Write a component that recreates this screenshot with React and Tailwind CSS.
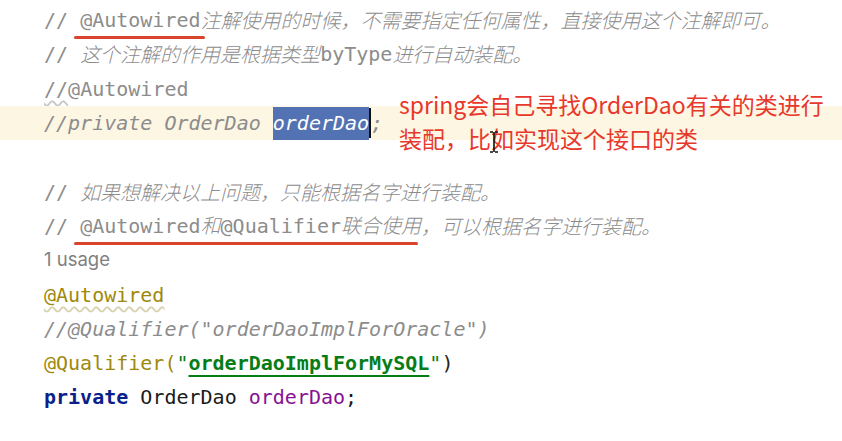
import React from 'react';

const mono = "font-['DejaVu_Sans_Mono','Noto_Sans_CJK_SC',monospace]";
const cjk = "italic font-['Noto_Sans_CJK_SC',sans-serif] font-light";

function Line({ children, className = '' }) {
  return (
    <div className={`h-[34.3px] pl-[44px] flex items-center whitespace-pre text-[20px] leading-none ${className}`}>
      {children}
    </div>
  );
}

function Marked({ children, extra = 'w-[calc(100%+10px)]' }) {
  return (
    <span className="relative">
      {children}
      <span className={`absolute left-[-6px] bottom-[-9px] h-[3px] rounded-full bg-[#d9452c] ${extra}`} />
    </span>
  );
}

export default function App() {
  return (
    <div className={`relative w-[842px] h-[441px] bg-white overflow-hidden ${mono}`}>
      <div className="pt-[3px] flex flex-col">
        <Line className="text-[#8c8c8c]">
          <span>// </span>
          <Marked>@Autowired</Marked>
          <span className={cjk}>注解使用的时候，不需要指定任何属性，直接使用这个注解即可。</span>
        </Line>
        <Line className="text-[#8c8c8c]">
          <span>// </span>
          <span className={cjk}>这个注解的作用是根据类型</span>
          <span>byType</span>
          <span className={cjk}>进行自动装配。</span>
        </Line>
        <Line className="text-[#8c8c8c]">
          <span className="underline decoration-wavy decoration-[#c8c8c8] underline-offset-4">//</span>
          <span>@Autowired</span>
        </Line>
        <Line className="text-[#8c8c8c] italic bg-[#fcf6e3]">
          <span>//private OrderDao </span>
          <span className="bg-[#5272b4] text-white h-[33px] flex items-center">orderDao</span>
          <span className="w-[2px] h-[30px] bg-[#111]" />
          <span>;</span>
        </Line>
        <Line />
        <Line className="text-[#8c8c8c]">
          <span>// </span>
          <span className={cjk}>如果想解决以上问题，只能根据名字进行装配。</span>
        </Line>
        <Line className="text-[#8c8c8c]">
          <span>// </span>
          <Marked extra="w-[344px]">
            <span>@Autowired</span>
            <span className={cjk}>和</span>
            <span>@Qualifier</span>
            <span className={cjk}>联合使用</span>
          </Marked>
          <span className={cjk}>，可以根据名字进行装配。</span>
        </Line>
        <div className="h-[34.3px] pl-[44px] flex items-center text-[18.5px] text-[#7f7f7f] font-['Inter',sans-serif]">
          1 usage
        </div>
        <Line className="text-[#9e880d]">
          <span className="underline decoration-wavy decoration-[#d8d2b0] underline-offset-4">@Autowired</span>
        </Line>
        <Line className="text-[#8c8c8c] italic">
          <span>//@Qualifier("orderDaoImplForOracle")</span>
        </Line>
        <Line>
          <span className="text-[#9e880d]">@Qualifier(</span>
          <span className="text-[#067d17]">"</span>
          <span className="text-[#067d17] font-bold underline underline-offset-[5px] decoration-[1.5px]">orderDaoImplForMySQL</span>
          <span className="text-[#067d17]">"</span>
          <span className="text-[#222]">)</span>
        </Line>
        <Line>
          <span className="text-[#0b1f8c] font-bold">private</span>
          <span className="text-[#1a1a1a]"> OrderDao </span>
          <span className="text-[#871094]">orderDao</span>
          <span className="text-[#1a1a1a]">;</span>
        </Line>
      </div>

      <div className="absolute left-[399px] top-[87px] flex flex-col text-[23px] leading-[34px] text-[#e8382b] font-['Noto_Sans_CJK_SC',sans-serif] whitespace-nowrap">
        <span>spring会自己寻找OrderDao有关的类进行</span>
        <span>装配，比如实现这个接口的类</span>
      </div>

      <svg className="absolute left-[489px] top-[131px]" width="10" height="22" viewBox="0 0 10 22">
        <path d="M1 1h3M6 1h3M5 1v20M1 21h3M6 21h3" stroke="#111" strokeWidth="1.6" fill="none" />
      </svg>
    </div>
  );
}
